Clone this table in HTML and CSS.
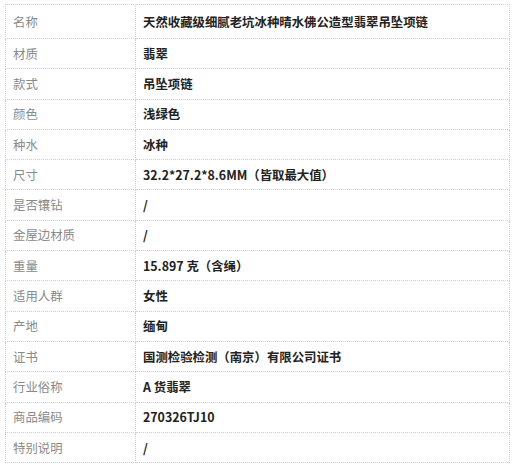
FILE: index.html
```html
<!DOCTYPE html>
<html lang="zh-CN">
<head>
<meta charset="utf-8">
<link rel="stylesheet" href="styles.css">
</head>
<body>
<table class="spec">
  <tr class="first"><td class="k">名称</td><td class="v">天然收藏级细腻老坑冰种晴水佛公造型翡翠吊坠项链</td></tr>
  <tr><td class="k">材质</td><td class="v">翡翠</td></tr>
  <tr><td class="k">款式</td><td class="v">吊坠项链</td></tr>
  <tr><td class="k">颜色</td><td class="v">浅绿色</td></tr>
  <tr><td class="k">种水</td><td class="v">冰种</td></tr>
  <tr><td class="k">尺寸</td><td class="v">32.2*27.2*8.6MM（皆取最大值）</td></tr>
  <tr><td class="k">是否镶钻</td><td class="v">/</td></tr>
  <tr><td class="k">金屋边材质</td><td class="v">/</td></tr>
  <tr><td class="k">重量</td><td class="v">15.897 克（含绳）</td></tr>
  <tr><td class="k">适用人群</td><td class="v">女性</td></tr>
  <tr><td class="k">产地</td><td class="v">缅甸</td></tr>
  <tr><td class="k">证书</td><td class="v">国测检验检测（南京）有限公司证书</td></tr>
  <tr><td class="k">行业俗称</td><td class="v">A 货翡翠</td></tr>
  <tr><td class="k">商品编码</td><td class="v">270326TJ10</td></tr>
  <tr><td class="k">特别说明</td><td class="v">/</td></tr>
</table>
</body>
</html>
```
FILE: styles.css
```css
html, body {
  margin: 0;
  padding: 0;
  background: #fff;
}
body {
  padding: 4px 0 0 5px;
  font-family: "Noto Sans CJK SC", "Noto Sans", sans-serif;
  font-size: 12.4px;
}
.spec {
  border-collapse: collapse;
  width: 505px;
  table-layout: fixed;
}
.spec td {
  border: 1px dotted #cfcfcf;
  padding: 0 7px;
  height: 29.3px;
  line-height: 16px;
  vertical-align: middle;
  white-space: nowrap;
}
.spec tr.first td {
  height: 33px;
}
.spec td.k {
  width: 115px;
  color: #8a8a8a;
}
.spec td.v {
  color: #222;
  font-weight: bold;
}
```
